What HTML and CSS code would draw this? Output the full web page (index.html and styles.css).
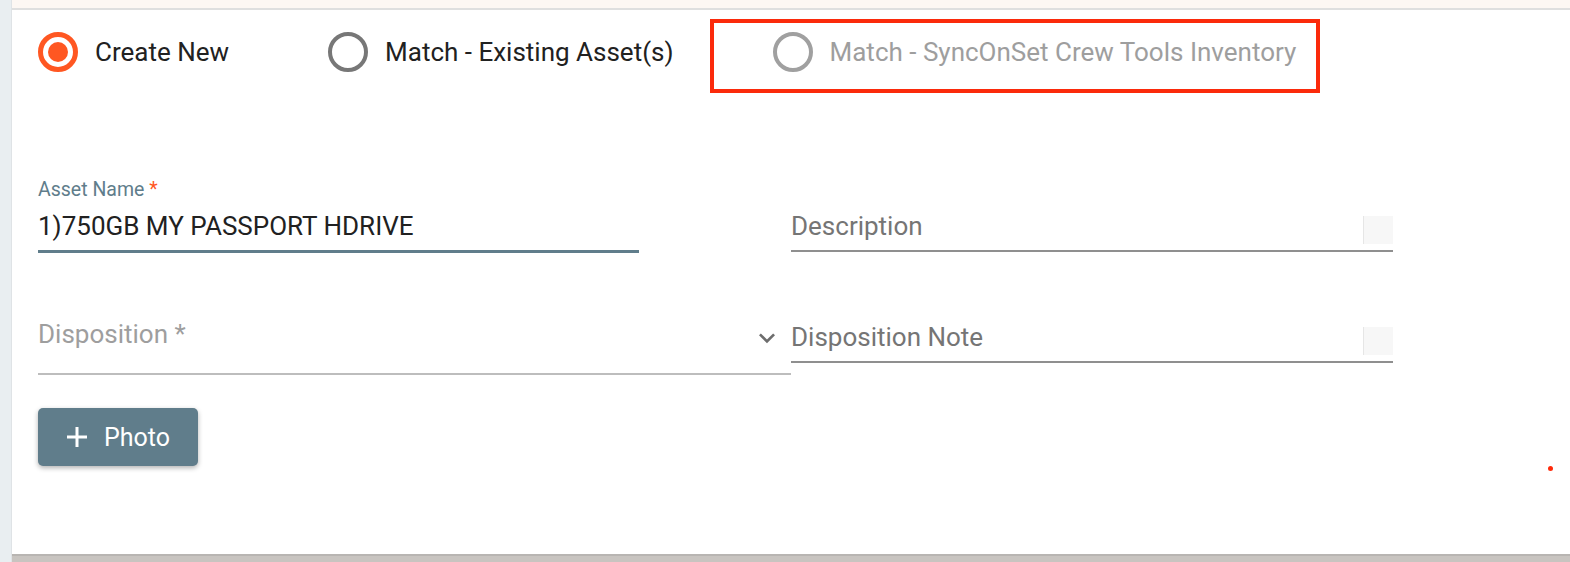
FILE: index.html
```html
<!DOCTYPE html>
<html lang="en">
<head>
<meta charset="utf-8">
<title>Asset</title>
<link rel="stylesheet" href="styles.css">
</head>
<body>
<div class="side"></div>
<div class="main">
  <div class="topstrip"></div>
  <div class="card">
    <div class="radios">
      <label class="radio">
        <span class="circle checked"><span class="dot"></span></span>
        <span class="rlabel">Create New</span>
      </label>
      <label class="radio">
        <span class="circle"></span>
        <span class="rlabel">Match - Existing Asset(s)</span>
      </label>
      <label class="radio disabled">
        <span class="circle"></span>
        <span class="rlabel">Match - SyncOnSet Crew Tools Inventory</span>
      </label>
    </div>
    <div class="highlight"></div>

    <div class="fields">
      <div class="field asset">
        <div class="flabel">Asset Name <span class="req">*</span></div>
        <div class="fvalue">1)750GB MY PASSPORT HDRIVE</div>
      </div>
      <div class="field textarea">
        <div class="flabel"></div>
        <div class="fvalue placeholder">Description</div>
        <span class="resize"></span>
      </div>
      <div class="select">
        <span class="splace">Disposition *</span>
        <svg class="chev" viewBox="0 0 24 24" width="32" height="32"><path d="M16.59 8.59L12 13.17 7.41 8.59 6 10l6 6 6-6z" fill="#6d6d6d"/></svg>
      </div>
      <div class="field textarea">
        <div class="flabel"></div>
        <div class="fvalue placeholder">Disposition Note</div>
        <span class="resize"></span>
      </div>
    </div>

    <button class="photo">
      <svg class="plus" viewBox="0 0 22 22" width="22" height="22"><path d="M11 1v20M1 11h20" stroke="#fff" stroke-width="3" fill="none"/></svg>
      <span>Photo</span>
    </button>

    <span class="reddot"></span>
  </div>
  <div class="bottom"></div>
</div>
</body>
</html>
```
FILE: styles.css
```css
html, body {
  margin: 0;
  padding: 0;
  height: 562px;
  overflow: hidden;
}
body {
  display: flex;
  font-family: Roboto, "Noto Sans", sans-serif;
  background: #e9eef1;
}
.side {
  width: 11px;
  flex: none;
  background: #e9eef1;
  border-right: 1px solid #dfe3e6;
}
.main {
  flex: 1;
  display: flex;
  flex-direction: column;
  min-width: 0;
}
.topstrip {
  height: 8px;
  background: #fdf7f3;
  flex: none;
}
.card {
  position: relative;
  height: 546px;
  box-sizing: border-box;
  border-top: 2px solid #dfdfdf;
  background: #fff;
  padding: 22px 0 0 26px;
  flex: none;
}
.bottom {
  flex: 1;
  background: #c8c4c0;
  border-top: 2px solid #b8b5b2;
}
.radios {
  display: flex;
  align-items: center;
  gap: 99px;
  height: 40px;
}
.radio {
  display: flex;
  align-items: center;
  gap: 17px;
}
.circle {
  width: 40px;
  height: 40px;
  box-sizing: border-box;
  border-radius: 50%;
  border: 4px solid #777;
  display: flex;
  align-items: center;
  justify-content: center;
  flex: none;
}
.circle.checked {
  border: 5px solid #ff5722;
}
.dot {
  width: 20px;
  height: 20px;
  border-radius: 50%;
  background: #ff5722;
}
.rlabel {
  font-size: 26px;
  line-height: 30px;
  color: #212121;
}
.disabled .circle {
  border-color: #a0a0a0;
}
.disabled .rlabel {
  color: #9e9e9e;
}
.highlight {
  position: absolute;
  left: 698px;
  top: 9px;
  width: 610px;
  height: 74px;
  box-sizing: border-box;
  border: 4px solid #fb2a0b;
}
.fields {
  margin-top: 106px;
  display: grid;
  grid-template-columns: 753px 602px;
  row-gap: 36px;
  align-items: start;
}
.field {
  position: relative;
}
.field.asset {
  width: 601px;
  border-bottom: 3px solid #607d8b;
}
.field.textarea {
  border-bottom: 2px solid #8f8f8f;
}
.flabel {
  font-size: 19.5px;
  line-height: 23px;
  height: 23px;
  color: #607d8b;
}
.req {
  color: #ff5722;
}
.fvalue {
  margin-top: 10px;
  font-size: 26px;
  line-height: 30px;
  padding-bottom: 9px;
  color: #212121;
}
.fvalue.placeholder {
  color: #757575;
}
.resize {
  position: absolute;
  right: 0;
  top: 38px;
  width: 29px;
  height: 28px;
  background: #f7f7f7;
  border-left: 1px solid #e6e6e6;
}
.select {
  display: flex;
  align-items: center;
  justify-content: space-between;
  padding-top: 29px;
  padding-bottom: 23px;
  border-bottom: 2px solid #bdbdbd;
}
.splace {
  font-size: 26px;
  line-height: 30px;
  color: #9e9e9e;
}
.chev {
  margin-right: 8px;
  margin-top: 4px;
  margin-bottom: -4px;
}
.photo {
  margin-top: 33px;
  display: flex;
  align-items: center;
  gap: 16px;
  width: 160px;
  height: 58px;
  box-sizing: border-box;
  padding: 0 0 0 28px;
  border: none;
  border-radius: 5px;
  background: #607d8b;
  color: #fff;
  font-family: Roboto, "Noto Sans", sans-serif;
  font-size: 25px;
  box-shadow: 0 2px 5px rgba(0, 0, 0, 0.3);
}
.plus {
  flex: none;
}
.reddot {
  position: absolute;
  left: 1536px;
  top: 456px;
  width: 5px;
  height: 5px;
  border-radius: 50%;
  background: #ff2a0a;
}
```
